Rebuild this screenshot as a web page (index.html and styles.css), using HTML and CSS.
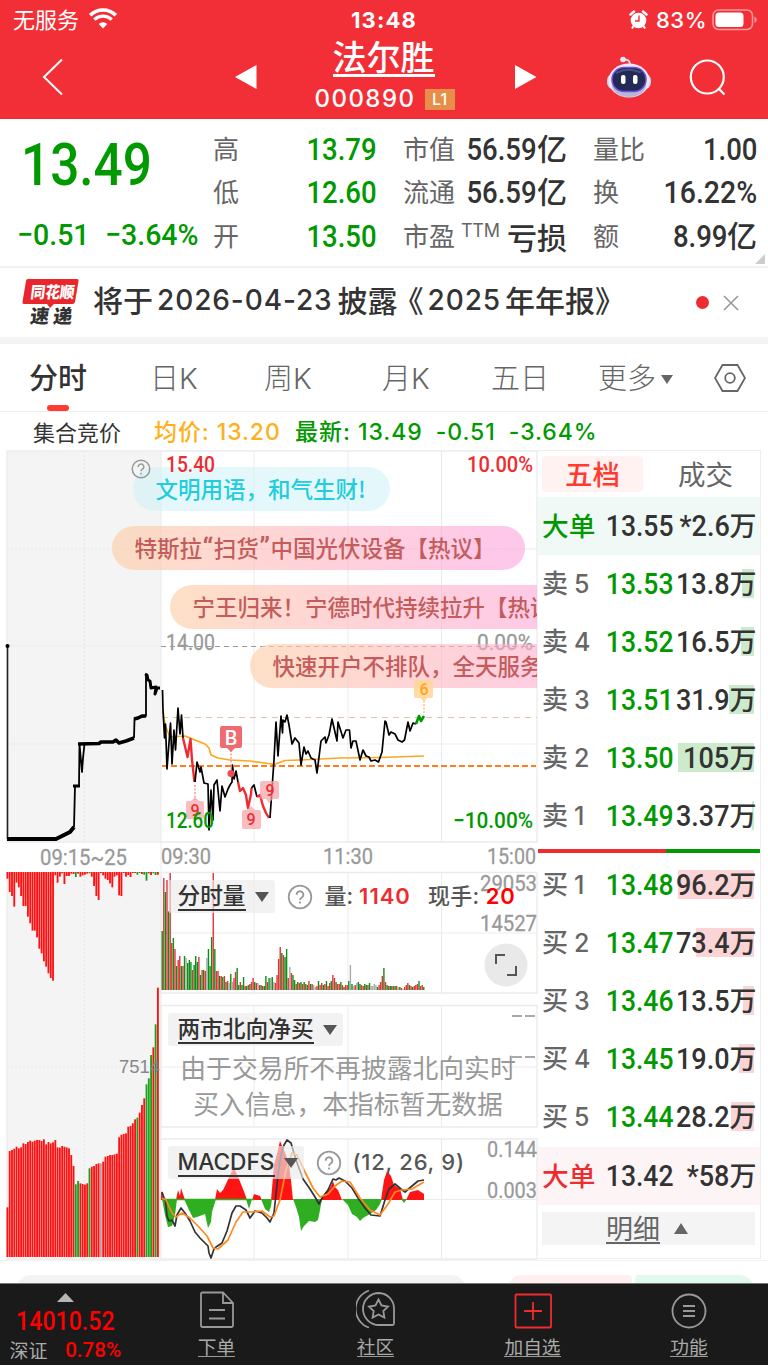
FILE: index.html
```html
<!DOCTYPE html>
<html lang="zh-CN">
<head>
<meta charset="utf-8">
<title>法尔胜 000890</title>
<link rel="stylesheet" href="styles.css">
</head>
<body>
<div class="app">
  <header class="top">
    <div class="status">
      <div class="status-left">无服务
        <svg width="28" height="21" viewBox="0 0 28 21" fill="#fff"><path d="M14 20.5 9.7 16a6.2 6.2 0 0 1 8.6 0z"/><path d="M5.300 11.600a12.500 12.500 0 0 1 17.400 0" fill="none" stroke="#fff" stroke-width="3.400"/><path d="M1.200 7.200a18.200 18.200 0 0 1 25.600 0" fill="none" stroke="#fff" stroke-width="3.600"/></svg>
      </div>
      <div class="clock">13:48</div>
      <div class="status-right">
        <svg width="19" height="20" viewBox="0 0 18 20"><circle cx="9" cy="10.500" r="7.800" fill="#fff"/><path d="M1 4.500 4.500 1.500M17 4.500 13.500 1.500" stroke="#fff" stroke-width="2.500" stroke-linecap="round"/><path d="m4 16-1.500 2.500M14 16l1.500 2.500" stroke="#fff" stroke-width="2"/><path d="M9.500 5.500v5.500H5.500" fill="none" stroke="#f22f37" stroke-width="1.400"/></svg>
        <span class="pct">83%</span>
        <svg width="46" height="22" viewBox="0 0 46 22"><rect x="1" y="1" width="39.500" height="19.500" rx="5.500" fill="none" stroke="#f8999c" stroke-width="1.500"/><rect x="3.500" y="3.500" width="28" height="14.500" rx="3.500" fill="#fff"/><path d="M42.500 7.500a3.500 3.500 0 0 1 0 6.500z" fill="#f8999c"/></svg>
      </div>
    </div>
    <div class="nav">
      <svg class="back" width="22" height="38" viewBox="0 0 22 38"><path d="M20 1.500 2 19l18 17.500" fill="none" stroke="#fff" stroke-width="2"/></svg>
      <svg class="prev" width="22" height="24" viewBox="0 0 22 24"><path d="M0 12 21.500 0v24z" fill="#fff"/></svg>
      <div class="title"><div class="name">法尔胜</div><div class="code">000890<span class="l1">L1</span></div></div>
      <svg class="next" width="22" height="24" viewBox="0 0 22 24"><path d="M21.500 12 0 0v24z" fill="#fff"/></svg>
      <svg class="bot" width="46" height="42" viewBox="0 0 46 42"><path d="M17 4.500q6-2.500 7 3.500" fill="none" stroke="#dcdcf2" stroke-width="2"/><circle cx="17" cy="3.500" r="2.800" fill="#e6e6f6"/><rect x="1" y="17.500" width="44" height="16" rx="7" fill="#cfd0ef"/><ellipse cx="23" cy="24.500" rx="20.500" ry="17" fill="#e9e9f8"/><ellipse cx="23" cy="29" rx="17" ry="12" fill="#b9b6dd"/><rect x="6" y="11.500" width="34" height="24" rx="12" fill="#232a55" stroke="#6e50d8" stroke-width="1.500"/><path d="M10 17q12-6 25-.5" stroke="#46507a" stroke-width="2" fill="none"/><rect x="15" y="19" width="4.500" height="9" rx="2" fill="#fff"/><rect x="27" y="19" width="4.500" height="9" rx="2" fill="#fff"/></svg>
      <svg class="search" width="38" height="38" viewBox="0 0 38 38"><circle cx="18.300" cy="18" r="16.500" fill="none" stroke="#fff" stroke-width="2.200"/><path d="m29.500 29.500 6 6" stroke="#fff" stroke-width="2.200"/></svg>
    </div>
  </header>

  <section class="quote">
    <div class="price-box">
      <div class="price"><span>13.49</span></div>
      <div class="delta"><span>−0.51</span><span>−3.64%</span></div>
    </div>
    <div class="stats">
      <div><label>高</label><b class="dn"><i>13.79</i></b></div><div><label>市值</label><b><i>56.59</i>亿</b></div><div><label>量比</label><b><i>1.00</i></b></div>
      <div><label>低</label><b class="dn"><i>12.60</i></b></div><div><label>流通</label><b><i>56.59</i>亿</b></div><div><label>换</label><b><i class="wide">16.22%</i></b></div>
      <div><label>开</label><b class="dn"><i>13.50</i></b></div><div><label>市盈<sup>TTM</sup></label><b>亏损</b></div><div><label>额</label><b><i>8.99</i>亿</b></div>
    </div>
    <svg class="corner" width="10" height="10"><path d="M10 0v10H0z" fill="#ccc"/></svg>
  </section>

  <section class="notice">
    <svg class="brand" width="60" height="50" viewBox="0 0 60 50"><path d="M6 1h49q2 0 1.500 2L53 24q-.5 2-2.500 2H32l-4 4-3-4H2q-2 0-1.500-2L4 3q.3-2 2-2z" fill="#e8262c"/><text x="8" y="20" class="brand-a" textLength="44" lengthAdjust="spacingAndGlyphs" transform="translate(2.500 0) skewX(-7)">同花顺</text><text x="11" y="45" class="brand-b" textLength="42" transform="translate(2 0) skewX(-7)">速递</text></svg>
    <p>将于<em>2026-04-23</em><span class="pl">披露</span><span class="bk">《</span><em>2025</em>年年报<span>》</span></p>
    <i class="dot"></i>
    <svg width="16" height="16" viewBox="0 0 16 16"><path d="m1 1 14 14M15 1 1 15" stroke="#999" stroke-width="1.600"/></svg>
  </section>

  <nav class="tabs">
    <span class="on">分时</span><span>日K</span><span>周K</span><span>月K</span><span>五日</span><span>更多<svg width="12" height="9"><path d="M0 0h12L6 9z" fill="#666"/></svg></span>
    <svg width="32" height="30" viewBox="0 0 32 30"><path d="M8.500 2h15L31 15l-7.500 13h-15L1 15z" fill="none" stroke="#666" stroke-width="1.800"/><circle cx="16" cy="15" r="4.800" fill="none" stroke="#666" stroke-width="1.800"/></svg>
  </nav>

  <div class="info"><span class="auction">集合竞价</span><span class="avg">均价: 13.20</span><span class="last">最新: 13.49</span><span class="last">-0.51</span><span class="last">-3.64%</span></div>

  <main class="board">
    <div class="charts">
      <svg id="chart" width="538" height="833" viewBox="0 450 538 833">
        <g id="plot"></g>
        <g class="lab">
          <text x="166" y="650" textLength="49" lengthAdjust="spacingAndGlyphs">14.00</text>
          <text x="477" y="650" textLength="56" lengthAdjust="spacingAndGlyphs">0.00%</text>
          <text x="453" y="828" class="down" textLength="80" lengthAdjust="spacingAndGlyphs">−10.00%</text>
          <text x="40" y="865" textLength="87" lengthAdjust="spacingAndGlyphs">09:15~25</text>
          <text x="161" y="864" textLength="50" lengthAdjust="spacingAndGlyphs">09:30</text>
          <text x="323" y="864" textLength="50" lengthAdjust="spacingAndGlyphs">11:30</text>
          <text x="487" y="864" textLength="49" lengthAdjust="spacingAndGlyphs">15:00</text>
        </g>
      </svg>
      <div class="lane">
        <div class="bub b1">文明用语，和气生财!</div>
        <div class="bub b2">特斯拉<q>“</q>扫货<q>”</q>中国光伏设备【热议】</div>
        <div class="bub b3">宁王归来！宁德时代持续拉升【热议】</div>
        <div class="bub b4">快速开户不排队，全天服务</div>
      </div>
      <svg class="help" width="20" height="20" viewBox="0 0 24 24"><circle cx="12" cy="12" r="10.500"/><path d="M8.700 9.500a3.300 3.300 0 1 1 5 2.700q-1.700 1-1.700 2.500M12 16.500v2"/></svg>
      <svg class="over" width="538" height="812" viewBox="0 450 538 812">
        <path d="M195 785V800M231 750v20" stroke="#ee6b70" stroke-dasharray="2 1.500"/>
        <path d="M424 697v18" stroke="#f9a640" stroke-dasharray="2 1.500"/>
        <g fill="#f5a3a7" fill-opacity=".72"><path d="m195 797 4 4h3q2 0 2 2v14q0 2-2 2h-14q-2 0-2-2v-14q0-2 2-2h3zM251 806l4 4h4q2 0 2 2v15q0 2-2 2h-15q-2 0-2-2v-15q0-2 2-2h3zM262 781h15q2 0 2 2v14q0 2-2 2h-4l-4 4-3-4h-4q-2 0-2-2v-14q0-2 2-2z"/></g>
        <path d="M222 726h18q2 0 2 2v18q0 2-2 2h-5l-4 4-4-4h-5q-2 0-2-2v-18q0-2 2-2z" fill="#ee6b70"/><circle cx="231" cy="773.500" r="3.600" fill="#ee4c52"/>
        <path d="M416 680h15q2 0 2 2v14q0 2-2 2h-4l-3 4-4-4h-4q-2 0-2-2v-14q0-2 2-2z" fill="#ffd596" fill-opacity=".85"/>
        <g class="mark"><text x="195" y="815.500">9</text><text x="251" y="825">9</text><text x="270" y="796">9</text><text x="424" y="695" class="six">6</text><text x="231" y="744.500" class="buy">B</text></g>
        <g class="lab"><text x="166" y="828" class="down" textLength="48" lengthAdjust="spacingAndGlyphs">12.60</text>
          <text x="166" y="472" class="up" textLength="49" lengthAdjust="spacingAndGlyphs">15.40</text>
          <text x="467" y="472" class="up" textLength="66" lengthAdjust="spacingAndGlyphs">10.00%</text>
          <text x="480" y="891" textLength="57" lengthAdjust="spacingAndGlyphs">29053</text><text x="480" y="931" textLength="57" lengthAdjust="spacingAndGlyphs">14527</text>
          <text x="119" y="1073" class="sans" textLength="41" lengthAdjust="spacingAndGlyphs">7514</text>
          <text x="487" y="1157" textLength="50" lengthAdjust="spacingAndGlyphs">0.144</text><text x="487" y="1197.500" textLength="50" lengthAdjust="spacingAndGlyphs">0.003</text></g>
        <path d="M512 1016h10M525 1016h10M512 1057h10M525 1057h10" stroke="#aaa" stroke-width="2"/>
      </svg>
      <div class="tool t1"><span class="pick"><u>分时量</u><s></s></span><svg class="q" width="26" height="26" viewBox="0 0 26 26"><circle cx="13" cy="13" r="11.300"/><path d="M9.700 10.700a3.300 3.300 0 1 1 5 2.700q-1.700 1-1.700 2.500M13 17.500v2"/></svg><span>量: <b>1140</b></span><span class="hand">现手: <b class="hot">20</b></span></div>
      <div class="tool t2"><span class="pick"><u>两市北向净买</u><s></s></span></div>
      <p class="closed">由于交易所不再披露北向实时<br>买入信息，本指标暂无数据</p>
      <div class="tool t3"><span class="pick"><u>MACDFS</u><s></s></span><svg class="q" width="26" height="26" viewBox="0 0 26 26"><circle cx="13" cy="13" r="11.300"/><path d="M9.700 10.700a3.300 3.300 0 1 1 5 2.700q-1.700 1-1.700 2.500M13 17.500v2"/></svg><span class="params">(12, 26, 9)</span></div>
      <svg class="full" width="44" height="44" viewBox="0 0 44 44"><circle cx="22" cy="22" r="21.500" fill="#e9e9e9"/><path d="M12 21v-9h9M32 23v9h-9" fill="none" stroke="#555" stroke-width="2"/></svg>
    </div>
    <aside class="book">
      <div class="book-tabs"><span class="on">五档</span><span>成交</span></div>
      <div class="row big sell"><label>大单</label><i>13.55</i><b><i>*2.6</i>万</b></div>
      <div class="row sell"><label>卖<em>5</em></label><i>13.53</i><b><i>13.8</i>万</b><span style="width:12px"></span></div>
      <div class="row sell"><label>卖<em>4</em></label><i>13.52</i><b><i>16.5</i>万</b><span style="width:13px"></span></div>
      <div class="row sell"><label>卖<em>3</em></label><i>13.51</i><b><i>31.9</i>万</b><span style="width:25px"></span></div>
      <div class="row sell"><label>卖<em>2</em></label><i>13.50</i><b><i>105</i>万</b><span style="width:76px"></span></div>
      <div class="row sell"><label>卖<em>1</em></label><i>13.49</i><b><i>3.37</i>万</b><span style="width:2px"></span></div>
      <div class="ratio"></div>
      <div class="row"><label>买<em>1</em></label><i>13.48</i><b><i>96.2</i>万</b><span style="width:76px"></span></div>
      <div class="row"><label>买<em>2</em></label><i>13.47</i><b><i>73.4</i>万</b><span style="width:58px"></span></div>
      <div class="row"><label>买<em>3</em></label><i>13.46</i><b><i>13.5</i>万</b><span style="width:11px"></span></div>
      <div class="row"><label>买<em>4</em></label><i>13.45</i><b><i>19.0</i>万</b><span style="width:15px"></span></div>
      <div class="row"><label>买<em>5</em></label><i>13.44</i><b><i>28.2</i>万</b><span style="width:23px"></span></div>
      <div class="row big buy"><label>大单</label><i>13.42</i><b><i>*58</i>万</b></div>
      <div class="detail"><u>明细</u><svg width="14" height="11"><path d="M0 11h14L7 0z" fill="#666"/></svg></div>
    </aside>
  </main>
  <div class="peek"><i></i><i></i><i></i></div>

  <footer class="bar">
    <div class="index"><svg width="17" height="9"><path d="M0 9h17L8.500 0z" fill="#b5b5b5"/></svg><span class="pts"><i>14010.52</i></span><div><label>深证</label><i>0.78%</i></div></div>
    <div class="act a1"><svg width="36" height="38" viewBox="0 0 36 38"><path d="M2 3q0-1.500 1.500-1.500H24L34 12v22.500q0 1.500-1.500 1.500h-29Q2 36 2 34.500zM24 2v10h10M10 19h16M10 27.500h16"/></svg><u>下单</u></div>
    <div class="act a2"><svg width="40" height="40" viewBox="0 0 40 40"><path d="M13 1.500a19.500 19.500 0 0 0 0 37M23 4a16 16 0 1 0 0 32h13.500q1.500 0 1.500-1.500V19A15.500 15.500 0 0 0 23 4zM22.500 10.500l3 6 6.500 1-4.700 4.600 1.100 6.500-5.900-3.100-5.900 3.100 1.100-6.500L13 17.500l6.500-1z"/></svg><u>社区</u></div>
    <div class="act a3"><svg class="red" width="38" height="36" viewBox="0 0 38 36"><rect x="1.500" y="1.500" width="35.500" height="33" rx="1"/><path d="M19 9v18M10 18h18"/></svg><u>加自选</u></div>
    <div class="act a4"><svg width="36" height="36" viewBox="0 0 36 36"><circle cx="18" cy="18" r="16.500"/><path d="M12 13h12M12 18h12M12 23h12"/></svg><u>功能</u></div>
  </footer>
</div>
<script src="chart.js"></script>
</body>
</html>
```
FILE: styles.css
```css
* { box-sizing: border-box; }
body { margin: 0; background: #fff; }
.app { width: 768px; height: 1366px; overflow: hidden; display: flex; flex-direction: column; font-family: Inter, "Noto Sans CJK SC", sans-serif; color: #333; }
svg { display: block; flex: none; }
i, em { font-style: normal; }
b { font-weight: 500; }

.top { height: 119px; background: #f22f37; color: #fff; flex: none; }
.status { height: 39px; display: grid; grid-template-columns: 1fr 100px 1fr; align-items: center; padding: 0 10px 0 13px; }
.status-left { display: flex; align-items: center; gap: 10px; font-size: 22px; line-height: 38px; }
.status-left svg { margin-top: -2px; }
.clock { text-align: center; font-size: 22px; font-weight: 700; letter-spacing: 1.200px; line-height: 38px; margin-left: -3px; }
.status-right { display: flex; justify-content: flex-end; align-items: center; }
.pct { font-size: 22px; font-weight: 500; margin: 0 5px 0 8px; letter-spacing: .5px; line-height: 38px; }
.nav { height: 80px; display: flex; align-items: flex-start; }
.back { margin: 19px 0 0 42px; }
.prev { margin: 26px 0 0 171px; }
.title { width: 142px; margin-left: 56px; text-align: center; white-space: nowrap; }
.name { font: 500 34px/37px "Noto Sans CJK SC", sans-serif; display: inline-block; border-bottom: 3px solid #fff; height: 38px; line-height: 34px; margin-left: -1px; }
.code { font: 500 24px/28px Inter, sans-serif; letter-spacing: 1.5px; display: flex; justify-content: center; align-items: center; margin-top: 8px; margin-left: 1px; }
.l1 { width: 30px; height: 21px; background: #e58f49; font: 500 16px/21px Inter, sans-serif; letter-spacing: 0; margin-left: 9px; }
.next { margin: 26px 0 0 60px; }
.bot { margin: 17px 0 0 69px; }
.search { margin: 20px 0 0 37px; }

.quote { height: 149px; flex: none; display: grid; grid-template-columns: 213px 1fr; border-bottom: 2px solid #f2f2f2; position: relative; }
.price { height: 92px; padding: 12px 0 0 21px; font: 500 59px/68px Roboto, sans-serif; color: #090; }
.price span { display: inline-block; transform: scaleX(.87); transform-origin: left; }
.delta { color: #090; font: 500 30px/48px Roboto, sans-serif; display: flex; padding-left: 17px; }
.delta span { display: block; transform: scaleX(.95); transform-origin: left; width: 88px; white-space: nowrap; }
.stats { display: grid; grid-template-columns: repeat(3, 164px); column-gap: 26px; grid-auto-rows: 43.300px; padding-top: 9px; }
.stats > div { display: flex; justify-content: space-between; align-items: center; white-space: nowrap; height: 43px; }
.stats label { font: 400 26px/43px "Noto Sans CJK SC", sans-serif; color: #666; display: flex; margin-top: -4px; }
.stats sup { font: 400 18px/36px Inter, sans-serif; margin-left: 6px; letter-spacing: -.3px; }
.stats b { font: 500 30px/39px "Noto Sans CJK SC", sans-serif; display: flex; }
.stats b i { font: 500 32px/43px Roboto, sans-serif; display: block; transform: scaleX(.86); transform-origin: right; }
.stats b .wide { transform: scaleX(.89); }
.stats label + b { margin-left: -30px; }
.dn { color: #090; }
.corner { position: absolute; right: 3px; bottom: 2px; }

.notice { height: 69px; flex: none; display: flex; align-items: center; padding-left: 22px; }
.brand-a { font: 900 16px "Noto Sans CJK SC", sans-serif; fill: #fff; }
.brand-b { font: 900 19px "Noto Sans CJK SC", sans-serif; fill: #333; }
.notice p { width: 610px; margin: -4px 0 0 11px; font: 500 30px/60px "Noto Sans CJK SC", sans-serif; white-space: nowrap; display: flex; }
.notice em { font: 500 28px/63px Inter, sans-serif; letter-spacing: .9px; margin: 0 2px 0 4px; }
.notice .pl { margin-left: 3px; }
.notice .bk { margin-left: -4px; }
.notice .bk + em { margin-right: 4px; }
.dot { width: 13px; height: 13px; border-radius: 50%; background: #ee2c30; margin: 0 14px 0 -7px; }
.tabs { height: 75px; flex: none; border-top: 7px solid #f4f4f4; border-bottom: 1px solid #eee; position: relative; display: flex; align-items: center; font: 300 29px/60px Inter, "Noto Sans CJK SC", sans-serif; color: #666; padding-left: 29px; white-space: nowrap; }
.tabs span { width: 121px; display: flex; align-items: center; margin-top: 3px; }
.tabs span:nth-child(2) { width: 114px; }
.tabs span:nth-child(3) { width: 118px; }
.tabs span:nth-child(4) { width: 109px; }
.tabs span:nth-child(5) { width: 107px; }
.tabs span:nth-child(6) { width: 116px; }
.tabs span svg { margin-left: 5px; }
.tabs .on { color: #333; font-weight: 500; position: relative; }
.tabs .on::after { content: ""; position: absolute; left: 18px; bottom: -2px; width: 22px; height: 6px; border-radius: 3px; background: #ff3b30; }
.info { height: 38px; flex: none; display: flex; align-items: center; font-weight: 600; font-size: 23px; line-height: 36px; white-space: nowrap; padding-left: 33px; letter-spacing: .5px; padding-top: 2px; }
.auction { font-weight: 400; font-size: 22px; width: 121px; letter-spacing: 0; padding-top: 2px; }
.avg { color: #ffb01a; width: 141px; font-weight: 500; letter-spacing: .9px; }
.last { color: #090; margin-right: 13px; font-weight: 500; letter-spacing: .95px; }

.board { height: 810px; flex: none; display: flex; }
.charts { width: 538px; position: relative; overflow: hidden; font-size: 22px; height: 812px; }
.lab text { font: 400 22px Roboto, sans-serif; fill: #999; stroke: #999; stroke-width: .3px; }
.lab .up { fill: #ee2c30; font-weight: 500; stroke: none; }
.lab .down { fill: #090; font-weight: 500; stroke: none; }
.lab .sans { font-family: "Liberation Sans", sans-serif; font-size: 18px; fill: #888; stroke: none; }
.over { position: absolute; left: 0; top: 0; }
.mark text { font: 500 16px Roboto, sans-serif; fill: #ee2c30; text-anchor: middle; }
.mark .six { fill: #ffa31a; }
.mark .buy { font-size: 20px; fill: #fff; }
.help { position: absolute; left: 131px; top: 9px; }
.help, .q { fill: none; stroke: #999; stroke-width: 1.800; }
.lane { position: absolute; left: 0; top: 0; width: 537px; height: 390px; overflow: hidden; }
.bub { position: absolute; height: 44px; border-radius: 22px; font: 500 22.500px/43px "Noto Sans CJK SC", sans-serif; color: #c45c5c; white-space: nowrap; padding: 0 22.500px; background: linear-gradient(100deg, rgba(253,207,168,.65), rgba(254,180,192,.6) 50%, rgba(253,164,224,.62)); }
.bub q { quotes: none; font-family: Roboto, sans-serif; font-size: 28px; line-height: 30px; display: inline-block; height: 30px; margin: 0 .5px; }
.b1 { left: 133px; top: 17px; width: 257px; color: #21cddc; background: rgba(205,242,248,.55); }
.b2 { left: 112px; top: 76px; width: 413px; }
.b3 { left: 170px; top: 135px; width: 420px; }
.b4 { left: 250px; top: 194px; width: 400px; }
.tool { position: absolute; left: 168px; height: 33px; display: flex; align-items: center; font: 500 22px/33px Inter, "Noto Sans CJK SC", sans-serif; color: #555; white-space: nowrap; }
.pick { display: flex; align-items: center; height: 33px; background: rgba(235,235,235,.65); border-radius: 3px; padding: 0 6px 0 9.500px; color: #333; font-size: 22.700px; }
.pick u { text-decoration: none; border-bottom: 2px solid #333; line-height: 26px; height: 28px; }
.pick s { margin-left: 9px; border: 7px solid transparent; border-top: 10px solid #555; border-bottom: 0; }
.q { margin: 0 12px; }
.tool b { color: #ee2c30; font-weight: 600; letter-spacing: 1px; }
.tool .hot { color: #f00; }
.params { letter-spacing: .75px; margin-left: -1px; }
.hand { margin-left: 17px; letter-spacing: .3px; }
.t1 { top: 430px; } .t2 { top: 563px; } .t3 { top: 696px; }
.closed { position: absolute; left: 160px; top: 599px; width: 376px; margin: 0; text-align: center; font: 400 25.800px/36px "Noto Sans CJK SC", sans-serif; color: #999; white-space: nowrap; }
.full { position: absolute; left: 484px; top: 493px; }

.book { width: 223px; height: 809px; border: 1px solid #eee; border-left: 0; }
.book-tabs { height: 46px; display: flex; gap: 12px; padding: 5px 4px; }
.book-tabs span { flex: none; width: 101px; text-align: center; font: 400 27.500px/34px "Noto Sans CJK SC", sans-serif; color: #666; border-radius: 4px; height: 36px; }
.book-tabs .on { background: #fff2f1; color: #ff3b30; font-weight: 500; }
.row { height: 58.050px; display: grid; grid-template-columns: 62px 69.500px 83px; padding-left: 4px; align-items: center; position: relative; font: 500 30px/58px Roboto, sans-serif; }
.row > i { color: #090; transform: scaleX(.885); transform-origin: right; justify-self: end; }
.row label { font: 500 26px/58px Inter, "Noto Sans CJK SC", sans-serif; color: #666; white-space: nowrap; }
.row em { font-weight: 500; margin-left: 6px; font-size: 25px; }
.row b { display: flex; justify-content: flex-end; font: 500 27px/56px "Noto Sans CJK SC", sans-serif; position: relative; z-index: 1; }
.row b i { font: 500 30px/58px Roboto, sans-serif; transform: scaleX(.9); transform-origin: right; }
.row span { position: absolute; right: 6px; top: 14px; height: 29px; background: rgba(235,45,50,.2); }
.sell span { background: rgba(0,153,0,.2); }
.big > i { color: #333; }
.row.big label { font-size: 26.700px; }
.big.sell { background: #f1f9f6; } .big.sell label { color: #090; }
.big.buy { background: #fdf5f5; } .big.buy label { color: #ee2c30; }
.ratio { height: 4px; margin: 4px 0 3px; background: linear-gradient(90deg, #ee2c30 57.500%, #090 0); }
.detail { margin: 7px 5px 0 4px; height: 33px; background: #f4f4f4; display: flex; justify-content: center; align-items: center; gap: 14px; font: 400 27px/32px "Noto Sans CJK SC", sans-serif; color: #666; padding-right: 3px; }
.detail u { text-decoration: none; border-bottom: 2px solid #666; height: 32px; line-height: 31px; }
.peek { flex: none; height: 23px; border-top: 1px solid #f2f2f2; display: flex; padding: 14px 0 0 16px; overflow: hidden; }
.peek i { height: 30px; border-radius: 15px; background: #f3f3f3; width: 450px; flex: none; }
.peek i:nth-child(2) { margin-left: 41px; width: 125px; background: #fff0ef; border-radius: 15px 4px 4px 15px; }
.peek i:nth-child(3) { margin-left: 3px; width: 119px; background: #e2faec; border-radius: 4px 15px 15px 4px; }
.bar { height: 82px; flex: none; background: #1a1a1a; border-top: 1px solid #777; display: grid; grid-template-columns: 137px 159px 159px 155px 158px; color: #aaa; }
.index { display: flex; flex-direction: column; align-items: center; padding: 9px 6px 0 0; color: #f00; font: 500 26px/33px Roboto, sans-serif; }
.index i { display: inline-block; transform: scaleX(.89); }
.pts { margin-top: 3px; height: 31px; }
.index > div { display: flex; width: 112px; justify-content: space-between; font: 400 19px/27px "Noto Sans CJK SC", sans-serif; }
.index label { color: #aaa; }
.index div i { font: 500 21px/28px Roboto, sans-serif; transform-origin: right; transform: scaleX(.98); }
.act { display: flex; flex-direction: column; align-items: center; justify-content: flex-end; padding-bottom: 8px; }
.act svg { fill: none; stroke: #999; stroke-width: 1.800; }
.act .red { stroke: #ee2c30; }
.act u { font: 400 18.700px/21px "Noto Sans CJK SC", sans-serif; text-decoration: none; border-bottom: 1.500px solid #999; margin-top: 6px; }
```
FILE: chart.js
```js
const out = [];
const line = (pts, color, w) => out.push(`<polyline points="${pts}" fill="none" stroke="${color}" stroke-width="${w}" stroke-linejoin="round"/>`);
const seg = (d, color, w = 1, dash = '') => out.push(`<path d="${d}" fill="none" stroke="${color}" stroke-width="${w}" stroke-dasharray="${dash}"/>`);

// Frames and grid
out.push('<path d="M7 451h154v390H7zM7 872h154v386H7z" fill="#f4f4f4"/>');
seg('M84.500 451V841M84.500 872V1258M7 549H161M7 744H161M7 1067H161', '#e6e6e6', 1, '2 2');
seg('M7 646H161M161 549H537M161 744H537M161 933H537M161 1067H537M161 1199.500H537', '#ebebeb');
seg('M7 451H537V842H7zM161 872.500H537V993H161zM161 1005.500H537V1127H161zM161 1139H537V1259H7V872', '#ebebeb', 1.3);
seg('M254 451V842M348 451V842M441.500 451V842M254 872V993M348 872V993M441.500 872V993M254 1005V1127M348 1005V1127M441.500 1005V1127M254 1139V1259M348 1139V1259M441.500 1139V1259M161 451V1259', '#ebebeb');
seg('M161 646.500H537', '#999', 1.2, '5 4');
seg('M162 717.500H537', '#dfc79d', 1.2, '6 5');
seg('M162 766H536', '#ff7f1c', 1.8, '6 3');

// Auction price
seg('M7.500 646V839', '#222', 1.6);
out.push('<circle cx="7.500" cy="646" r="2"/>');
line('7,839 56,839 60,837 66,834 70,832 74,827', '#000', 4);
line('74,827 75,786 79,786 79.500,744 82,772 83,758 84.500,744', '#000', 1.8);
line('78,744 99,743.500 101,742 113,742 116,740 119,743 126,741 134,738', '#000', 3.6);
line('134,738 134.500,719 146,716 146,674', '#000', 1.8);
line('134,719 138,718 142,716 146,716', '#000', 3.6);
line('145,674 147,675 148,680 150,681 151,688 156,687 155,694 157,688 160,688', '#000', 3);
line('73,786 80,786', '#000', 3);

// Average and live price
line('163,711 165,725 170,737 185,736 195,740 205,744 209,748 211,755 218,758 230,760 250,761 265,763 274,764.500 285,760.500 300,760 340,758 380,757.500 424,756', '#fba81e', 1.7);
line('162.500,690 163,710 164.500,738 165.500,724 167,769 170.500,723 172,764 174,730 175.500,750 178,708 180,734 181.500,715 183,738', '#000', 1.7);
line('183,738 187.500,757 190.500,739 192,760 194.500,782', '#ee2c30', 2.4);
line('195,782 197,762 200,772 201,767 204,783 208,784 209,830 211,790 213,820 214,785 217,780 220,811 222,786 225,797 228,789 230,785 232,782 232.500,765 234,779 236,771 238,782', '#000', 1.7);
line('238,782 240,791 243,788 246,795 248,808 251,794 251.500,788', '#ee2c30', 2.4);
line('251.500,788 254,785 257,797', '#000', 1.7);
line('257,797 260,795 263,806 266,813 269,818', '#ee2c30', 2.4);
line('270,818 274,760 276,722 278,756 281,716 282.500,733 283,720 285,722 287,715 289,725 292,744 295,738 299,743 301,765 304,747 306,754 308,751 311,758 315,760 317,773 321,741 325,737 326,743 329,735 332,719 337,741 338,722 343,738 346,730 349.500,730 351,748 353,741 356,741 360,760 363,750 366,756 369,757 371,761 375,760 378.500,762 382,752 385,721 386,722 389,735 391,732 395,734 398,740 402,742 404.500,740 408,722 410,731 413,723 416,724', '#000', 1.7);
line('416,724 419,716 421,721 424,716', '#090', 2.6);

const tone = { r: '#ff1010', g: '#1ba01b', x: '#aaa', d: '#e33238', e: '#0b8f14' };
// Unmatched volume hangs from the top, matched volume stands on the base line
const hang = '20r 60r 72r 104r 32r 46r 72r 102r 102r 134r 154r 176r 176r 196r 230r 244r 268r 284r 304r 318r 326r 10r 32r 14r 4r 36r 12r 12r 5r 6r 15g 5r 14r 10r 8r 5r 4g 14r 42r 72r 84r 3r 10r 20r 24r 34r 46r 14r 10r 70r 72r 3r 14r 9r 15r 3r 3r 8g 3g 6r 8g 26g 4r 9r 4g 9g 8r'.split(' ');
const stack = '1042r 873r 870r 866r 860r 865r 862r 850r 852r 846r 842r 845r 842r 840r 840r 843r 838r 853r 846r 850r 847r 840r 862r 863r 858r 860r 862r 865r 885r 918r 973g 963g 970r 972r 974r 970r 925g 920r 918r 912r 910r 910x 905r 890r 888r 885r 885r 883r 881r 832r 824r 822r 820r 800r 798r 790r 778r 773g 758r 735r 715r 673g 655g 585g 562r 493g 383r'.split(' ');
hang.forEach((s, i) => { const x = 6.500 + i * 2.280; out.push(`<rect x="${x}" y="872" width="1.850" height="${parseInt(s) / 3}" fill="${tone[s.slice(-1)]}"/>`); });
stack.forEach((s, i) => { const x = 6.500 + i * 2.280, y = 860 + parseInt(s) / 3; out.push(`<rect x="${x}" y="${y}" width="1.850" height="${1257 - y}" fill="${tone[s.slice(-1)]}"/>`); });

// Minute volume
const vol = '59e 112d 98e 110d 79e 117d 47d 52e 41d 24e 30d 34d 24e 24d 34e 32x 27e 30e 28e 20d 25e 34e 28e 33d 15e 20d 20e 19d 32x 41e 24e 53e 117d 41e 19d 19d 14e 14d 13e 14d 8e 9d 7x 16e 8x 12d 18d 22e 5e 8d 5e 13e 4d 4e 5d 6e 8d 12d 8e 7d 7x 5d 5e 4d 4e 14e 8d 12e 12x 13e 8x 7d 15d 31d 43d 37e 35d 33e 41e 12d 23x 17d 15e 10e 6d 8e 7d 8e 6d 8e 6d 5e 9d 6e 6d 5x 3x 4d 9e 5d 7d 5e 6d 9e 4d 7d 9e 15d 12d 8e 6d 6d 8e 5d 3e 5d 5d 9e 25x 6e 4x 5d 7x 8e 6e 5d 4d 6e 5e 5d 7e 4x 4x 6x 5x 3e 5d 8d 14d 22e 8d 5e 4d 4e 4e 4d 4e 4d 3x 3e 2d 1x 3d 5d 7d 5e 4d 3e 4d 5d 6d 9e 4d 5d 3e'.split(' ');
vol.forEach((s, i) => { const x = 161.500 + i * 1.595; out.push(`<rect x="${x}" y="${990 - parseInt(s)}" width="1.400" height="${parseInt(s)}" fill="${tone[s.slice(-1)]}"/>`); });

// MACD
const area = (p, c) => out.push(`<polygon points="${p}" fill="${c}"/>`);
['161,1200 161,1191 164,1200', '176,1200 178,1190 180,1196 181,1188 185,1200', '215,1200 217,1189 220,1193 223,1190 226,1184 230,1175 234,1168 239,1179 243,1189 246,1197 247,1200', '252,1200 254,1194 260,1196 262,1200', '271,1200 274,1165 278,1150 280,1141 283,1148 286,1155 289,1165 291,1180 293,1200', '321,1200 325,1193 330,1188 333,1181 335,1187 338,1190 342,1200', '381,1200 384,1180 387,1171 391,1176 394,1185 400,1189 403,1200', '406,1200 410,1192 418,1190 424,1194 424,1200'].forEach(p => area(p, '#ff1414'));
['162,1199 165,1215 168,1227 172,1226 175,1215 177,1199', '184,1199 189,1210 193,1218 197,1217 205,1214 208,1228 211,1222 212,1212 216,1199', '246,1199 249,1209 252,1199', '261,1199 265,1209 269,1212 271,1206 272,1199', '293,1199 296,1207 299,1217 301,1231 304,1226 309,1221 315,1222 318,1220 320,1210 322,1199', '342,1199 348,1205 352,1214 357,1217 360,1221 363,1218 370,1214 376,1210 380,1204 382,1199', '401,1199 404,1203 407,1199'].forEach(p => area(p, '#2eae20'));
seg('M162 1199.500H254', '#2eae20', 1.5);
line('162,1192 164,1198 165.500,1201 167,1216 169,1221 172,1220 175,1226 177,1215 181,1208 185,1213 190,1221 195,1232 200,1238 205,1243 208,1246 209,1253 211,1258 214,1249 216,1247 222,1243 227,1231 232,1213 236,1206 240,1206 246,1210 250,1218 255,1211 262,1213 267,1218 270,1222 274,1213 278,1175 281,1155 284,1145 287,1140 291,1143 296,1160 303,1179 310,1189 315,1197 319,1204 322,1198 328,1190 333,1179 336,1180 339,1178 345,1181 352,1188 358,1198 365,1208 371,1215 380,1216 385,1200 389,1189 395,1184 401,1189 405,1192 412,1186 418,1181 424,1180', '#333', 1.7);
line('162,1198 166,1200 172,1213 176,1217 182,1213 190,1218 198,1226 207,1236 213,1248 218,1249 228,1240 236,1222 243,1212 250,1212 262,1211 270,1217 274,1216 280,1200 286,1170 292,1153 297,1155 305,1172 313,1188 320,1197 328,1194 335,1186 342,1181 350,1182 360,1198 370,1210 380,1215 388,1204 395,1192 402,1190 412,1189 424,1182', '#ff8a1f', 1.7);
document.getElementById('plot').innerHTML = out.join('');
```
